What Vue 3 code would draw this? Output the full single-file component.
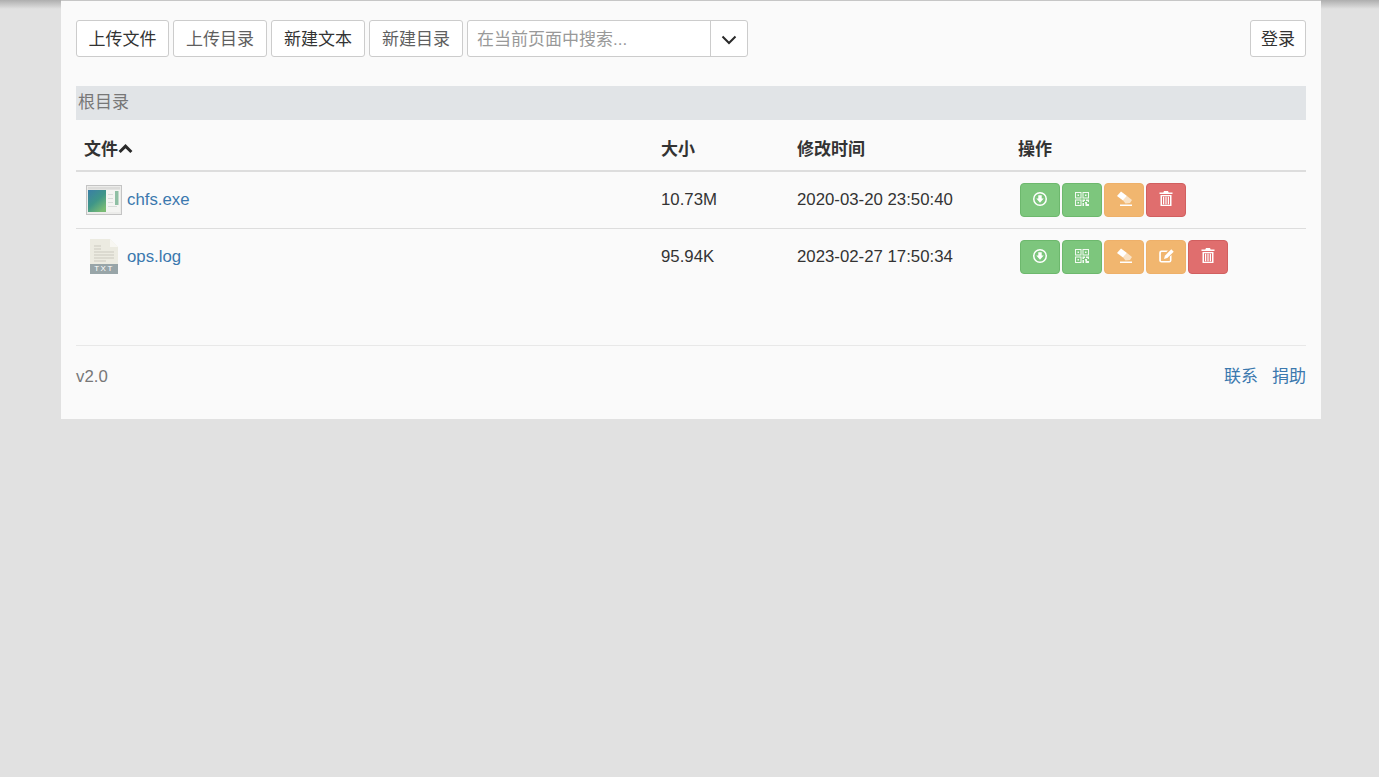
<template>
  <div class="page">
    <div class="top-shadow"></div>
    <div class="container">
      <div class="toolbar">
        <button v-for="b in toolButtons" :key="b.label" type="button" class="btn" :class="{ soft: b.soft }"><span>{{ b.label }}</span></button>
        <div class="search">
          <input type="text" class="search-input" placeholder="在当前页面中搜索..." />
          <button type="button" class="search-toggle">
            <svg width="16" height="10" viewBox="0 0 16 10"><path d="M1.500 1.500 8 8l6.500-6.500" fill="none" stroke="#2a2a2a" stroke-width="2" /></svg>
          </button>
        </div>
        <button type="button" class="btn login"><span>登录</span></button>
      </div>

      <div class="crumb">根目录</div>

      <table class="files">
        <colgroup>
          <col style="width: 577px" />
          <col style="width: 136px" />
          <col style="width: 221px" />
          <col />
        </colgroup>
        <thead>
          <tr>
            <th>文件<svg class="sort" width="15" height="10" viewBox="0 0 15 10"><path d="M1.600 8 7.500 2.200 13.400 8" fill="none" stroke="#2a2a2a" stroke-width="3" /></svg></th>
            <th>大小</th>
            <th>修改时间</th>
            <th>操作</th>
          </tr>
        </thead>
        <tbody>
          <tr v-for="f in files" :key="f.name">
            <td>
              <div class="file-cell">
                <svg v-if="f.type === 'exe'" class="thumb" width="36" height="30" viewBox="0 0 36 30">
                  <defs>
                    <linearGradient id="exeGrad" x1="0" y1="0" x2="0.7" y2="1">
                      <stop offset="0" stop-color="#3a7ea6" />
                      <stop offset="0.55" stop-color="#3f9688" />
                      <stop offset="1" stop-color="#79bb74" />
                    </linearGradient>
                  </defs>
                  <rect x="0.500" y="0.500" width="35" height="29" fill="#ececea" stroke="#c4c4c4" />
                  <rect x="2" y="2" width="32" height="2.500" fill="#dcdcda" />
                  <rect x="2" y="5" width="18" height="22" fill="url(#exeGrad)" />
                  <rect x="20" y="5" width="14" height="22" fill="#f4f4f2" />
                  <rect x="29" y="6" width="3.500" height="14" fill="#8fbfa4" />
                  <rect x="22" y="9" width="5" height="1" fill="#d8dcd9" />
                  <rect x="22" y="13" width="5" height="1" fill="#d8dcd9" />
                  <rect x="22" y="17" width="5" height="1" fill="#d8dcd9" />
                  <rect x="22" y="21" width="9" height="1" fill="#d8dcd9" />
                </svg>
                <span v-else class="txt-icon">
                  <svg width="28" height="26" viewBox="0 0 28 26">
                    <path d="M0 0h20l8 8v18H0z" fill="#ecebe1" />
                    <path d="M20 0l8 8h-8z" fill="#f8f7f2" />
                    <path d="M4 7h7M4 10h7M4 13h20M4 16h20M4 19h20M4 22h12" stroke="#cbc9bf" stroke-width="1" />
                  </svg>
                  <span class="txt-tag">TXT</span>
                </span>
                <a class="link" href="#">{{ f.name }}</a>
              </div>
            </td>
            <td>{{ f.size }}</td>
            <td>{{ f.time }}</td>
            <td>
              <div class="actions">
                <button v-for="(a, i) in f.actions" :key="i" type="button" class="act" :class="a">
                  <svg v-if="a === 'down'" width="14" height="14" viewBox="0 0 14 14"><path fill="#fff" fill-rule="evenodd" d="M7 0a7 7 0 1 1 0 14A7 7 0 0 1 7 0Zm0 1.500a5.500 5.500 0 1 0 0 11 5.500 5.500 0 0 0 0-11ZM5.300 3.200h3.400v3.400h2L7 10.800 3.300 6.600h2Z" /></svg>
                  <svg v-else-if="a === 'qr'" width="16" height="16" viewBox="0 0 16 16"><path fill="#fff" fill-rule="evenodd" opacity=".9" d="M1 1h6.500v6.500H1Zm1 1v4.500h4.500V2ZM8.500 1H15v6.500H8.500Zm1 1v4.500H14V2ZM1 8.500h6.500V15H1Zm1 1V14h4.500V9.500ZM3.500 3.500H5V5H3.500Zm7.500 0h1.500V5H11Zm-7.500 7.500H5v1.500H3.500ZM8.500 8.500H11V10H10v1H8.500ZM12 8.500h3V11h-1.200V10H12ZM8.500 12H10v3H8.500ZM11 11h2v2h2v2h-3.500v-2.500H11Z" /></svg>
                  <svg v-else-if="a === 'erase'" width="16" height="15" viewBox="0 0 16 15"><path fill="#fff" d="M5 0.500 11 5 7 9.500 1 5Z" /><path fill="#fff" opacity=".6" d="M11 5 16 9 14 12 9.500 12.500 7 9.500Z" /><path fill="#fff" d="M4 13.500h12V15H4Z" /></svg>
                  <svg v-else-if="a === 'edit'" width="15" height="14" viewBox="0 0 15 14"><path fill="#fff" d="M2.400 1.500H9L7.400 3.100H2.800a.9.9 0 0 0-.9.900v7.200c0 .5.400.9.900.9H10c.5 0 .9-.4.900-.9V7.600l1.600-1.600v5.600a2.200 2.200 0 0 1-2.200 2H2.400a2.200 2.200 0 0 1-2.200-2V3.700a2.200 2.200 0 0 1 2.200-2.200Z" /><path fill="#fff" d="M12.300 0.300 14.700 2.700 8.300 9.100 5 10l.9-3.300Z" /></svg>
                  <svg v-else width="14" height="15" viewBox="0 0 14 15"><path fill="#fff" fill-rule="evenodd" d="M5 0h4l.7 1.500H13.500V3H.5V1.500h3.800ZM1.500 4h11v11h-11Zm1.500 1.200V13.800h8V5.200Zm1 .6h1.200v7.400H4Zm2.400 0h1.200v7.400H6.400Zm2.400 0H10v7.400H8.800Z" /></svg>
                </button>
              </div>
            </td>
          </tr>
        </tbody>
      </table>

      <div class="footer">
        <span class="version">v2.0</span>
        <div class="footer-links">
          <a class="link" href="#">联系</a>
          <a class="link" href="#">捐助</a>
        </div>
      </div>
    </div>
  </div>
</template>

<script setup>
const toolButtons = [
  { label: '上传文件' },
  { label: '上传目录', soft: true },
  { label: '新建文本' },
  { label: '新建目录', soft: true }
]

const files = [
  {
    name: 'chfs.exe',
    type: 'exe',
    size: '10.73M',
    time: '2020-03-20 23:50:40',
    actions: ['down', 'qr', 'erase', 'trash']
  },
  {
    name: 'ops.log',
    type: 'txt',
    size: '95.94K',
    time: '2023-02-27 17:50:34',
    actions: ['down', 'qr', 'erase', 'edit', 'trash']
  }
]
</script>

<style>
html,
body {
  margin: 0;
  background: #e1e1e1;
}
</style>

<style scoped>
.page {
  position: relative;
  min-height: 777px;
  background: #e1e1e1;
  font-family: "Liberation Sans", "Noto Sans CJK SC", sans-serif;
  font-size: 17px;
  color: #333;
  overflow: hidden;
}

.top-shadow {
  position: absolute;
  top: 0;
  left: 0;
  right: 0;
  height: 9px;
  background: linear-gradient(#aeaeae, #e1e1e1);
}

.container {
  position: relative;
  width: 1230px;
  margin-left: 61px;
  padding: 19px 15px 0;
  height: 399px;
  background: #fafafa;
  border-top: 1px solid #c6c6c6;
}

.toolbar {
  display: flex;
  gap: 4px;
  height: 37px;
}

.btn {
  height: 37px;
  width: 94px;
  padding: 0 0 2px;
  border: 1px solid #ccc;
  border-radius: 3px;
  background: #fff;
  font: inherit;
  color: #333;
}

.btn:nth-child(1) {
  width: 93px;
}

.btn.soft {
  color: #5f5f5f;
}

.login {
  width: 56px;
  margin-left: auto;
}

.search {
  display: flex;
  width: 281px;
  height: 37px;
  box-sizing: border-box;
  border: 1px solid #ccc;
  border-radius: 3px;
  background: #fff;
}

.search-input {
  flex: 1;
  min-width: 0;
  border: 0;
  outline: 0;
  padding: 3px 9px 0;
  background: transparent;
  font: inherit;
}

.search-input::placeholder {
  color: #999;
  opacity: 1;
}

.search-toggle {
  width: 37px;
  padding: 2px 0 0;
  border: 0;
  border-left: 1px solid #ccc;
  background: transparent;
  display: flex;
  align-items: center;
  justify-content: center;
}

.crumb {
  margin-top: 29px;
  height: 34px;
  line-height: 34px;
  padding-left: 2px;
  background: #e1e4e7;
  color: #777;
}

.files {
  width: 1230px;
  border-collapse: collapse;
  table-layout: fixed;
}

th {
  height: 51px;
  padding: 0 8px 8px;
  vertical-align: bottom;
  text-align: left;
  font-weight: 700;
  line-height: 24px;
  border-bottom: 2px solid #ddd;
  box-sizing: border-box;
  white-space: nowrap;
}

.sort {
  vertical-align: 1px;
}

td {
  height: 57px;
  padding: 0 8px;
  font-size: 16.800px;
  border-bottom: 1px solid #ddd;
  box-sizing: border-box;
}

tbody tr:last-child td {
  border-bottom: 0;
}

.file-cell {
  display: flex;
  align-items: center;
}

.thumb {
  margin-left: 2px;
  margin-right: 5px;
}

.txt-icon {
  width: 28px;
  margin-left: 6px;
  margin-right: 9px;
  display: flex;
  flex-direction: column;
}

.txt-tag {
  height: 10px;
  line-height: 10px;
  margin-top: -1px;
  background: #98a5a8;
  color: #fff;
  font-size: 8px;
  letter-spacing: 1.500px;
  text-align: center;
}

.link {
  color: #3a78ae;
  text-decoration: none;
}

.actions {
  display: flex;
  gap: 2px;
  margin-left: 2px;
}

.act {
  width: 40px;
  height: 34px;
  padding: 0 0 2px;
  border: 1px solid;
  border-radius: 4px;
  display: flex;
  align-items: center;
  justify-content: center;
}

.down,
.qr {
  background: #7dc67d;
  border-color: #6db86d;
}

.erase,
.edit {
  background: #f1b66f;
  border-color: #eeb069;
}

.trash {
  background: #e06e6e;
  border-color: #d15f5f;
}

.footer {
  margin-top: 60px;
  border-top: 1px solid #e8e8e8;
  padding-top: 1px;
  height: 60px;
  display: flex;
  align-items: center;
  justify-content: space-between;
  line-height: 24px;
}

.version {
  font-size: 16.800px;
  line-height: 24px;
  color: #777;
}

.footer-links {
  display: flex;
  gap: 14px;
}

.footer-links .link {
  line-height: 24px;
  display: block;
  margin-top: -1px;
}
</style>
